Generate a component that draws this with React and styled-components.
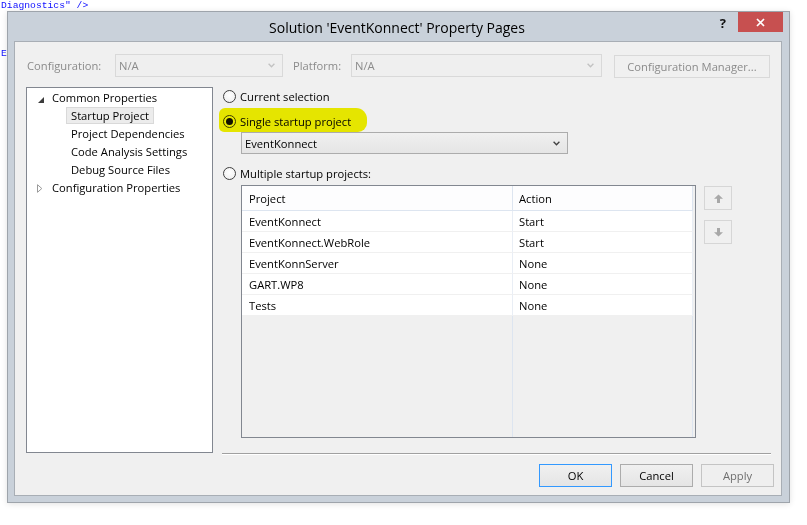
import React from "react";
import styled, { createGlobalStyle } from "styled-components";

const UI_FONT = `"Open Sans", "Noto Sans", sans-serif`;

const Global = createGlobalStyle`
  html, body { margin: 0; padding: 0; background: #fff; }
  body { font-family: ${UI_FONT}; }
  * { box-sizing: border-box; }
`;

const Desktop = styled.div`
  position: relative;
  width: 807px;
  height: 525px;
  background: #fff;
  overflow: hidden;
`;

const CodeBehind = styled.div`
  margin-top: -2px;
  padding-left: 1px;
  font: 9.7px/16px "Liberation Mono", "DejaVu Sans Mono", monospace;
  color: #1010ff;
  white-space: pre;
`;

const CodeLine = styled.div`
  height: 16px;
`;

const Window = styled.div`
  position: absolute;
  left: 7px;
  top: 11px;
  width: 783px;
  height: 492px;
  border: 1px solid #9ea4ab;
  background: #c9d1da;
  box-shadow: 0 1px 6px rgba(0, 0, 0, 0.12);
  display: flex;
  flex-direction: column;
  padding: 0 7px 6px 6px;
`;

const TitleBar = styled.div`
  height: 29px;
  display: grid;
  grid-template-columns: 1fr auto 1fr;
  align-items: center;
  margin-right: -1px;
`;

const Title = styled.div`
  grid-column: 2;
  font: 400 14px ${UI_FONT};
  color: #000;
  padding-top: 1px;
  margin-left: -3px;
`;

const Controls = styled.div`
  grid-column: 3;
  justify-self: end;
  align-self: start;
  display: flex;
  align-items: flex-start;
`;

const HelpGlyph = styled.div`
  font: 700 13px ${UI_FONT};
  color: #111;
  margin: 2px 12px 0 0;
`;

const CloseButton = styled.div`
  width: 45px;
  height: 20px;
  background: #c75050;
  display: flex;
  align-items: center;
  justify-content: center;
`;

const Client = styled.div`
  flex: 1;
  border: 1px solid #a8aeb5;
  background: #f0f0f0;
  display: flex;
  flex-direction: column;
  padding: 12px 10px 6px 11px;
  font: 400 11.2px ${UI_FONT};
  color: #000;
`;

const ConfigRow = styled.div`
  display: flex;
  align-items: flex-start;
  height: 23px;
`;

const FieldLabel = styled.div`
  width: ${(p) => p.$w}px;
  margin-left: ${(p) => p.$ml || 0}px;
  height: 23px;
  line-height: 23px;
  color: #8b8b8b;
`;

const Combo = styled.div`
  width: ${(p) => p.$w}px;
  height: ${(p) => p.$h || 23}px;
  display: flex;
  align-items: center;
  justify-content: space-between;
  padding: 0 7px 0 3px;
  border: 1px solid ${(p) => (p.$disabled ? "#d9d9d9" : "#acacac")};
  background: ${(p) =>
    p.$disabled ? "#efefef" : "linear-gradient(#f0f0f0, #e5e5e5)"};
  color: ${(p) => (p.$disabled ? "#8b8b8b" : "#000")};
`;

const ConfigManagerButton = styled.div`
  width: 156px;
  height: 23px;
  margin: 1px 0 0 12px;
  border: 1px solid #d9d9d9;
  background: #f0f0f0;
  color: #8b8b8b;
  display: flex;
  align-items: center;
  justify-content: center;
`;

const Main = styled.div`
  display: flex;
  align-items: flex-start;
  margin-top: 10px;
`;

const Tree = styled.div`
  width: 187px;
  height: 366px;
  border: 1px solid #828790;
  background: #fff;
  padding-top: 0;
`;

const TreeRow = styled.div`
  height: 18px;
  display: flex;
  align-items: center;
  padding-left: ${(p) => p.$indent}px;
`;

const Expander = styled.span`
  width: 14px;
  height: 18px;
  display: flex;
  align-items: center;
  padding-top: ${(p) => p.$dy}px;
`;

const TreeLabel = styled.span`
  height: 17px;
  line-height: 15px;
  padding: 0 4px;
  border: 1px solid ${(p) => (p.$selected ? "#d9d9d9" : "transparent")};
  background: ${(p) => (p.$selected ? "#ececec" : "transparent")};
  margin-left: ${(p) => p.$ml || 0}px;
`;

const RightPanel = styled.div`
  flex: 1;
  margin-left: 9px;
  display: flex;
  flex-direction: column;
`;

const RadioRow = styled.label`
  position: relative;
  height: 18px;
  margin-top: ${(p) => p.$mt || 0}px;
  display: flex;
  align-items: center;
  gap: 4px;
  padding-left: 1px;
  ${(p) =>
    p.$highlight &&
    `
    &::after {
      content: "";
      position: absolute;
      left: -3px;
      top: -4px;
      width: 148px;
      height: 24px;
      background: #f4f400;
      border-radius: 6px 11px 9px 5px;
      mix-blend-mode: multiply;
      pointer-events: none;
    }
  `}
`;

const RadioCircle = styled.span`
  width: 13px;
  height: 13px;
  border-radius: 50%;
  border: 1px solid #3f3f3f;
  background: radial-gradient(circle at 50% 40%, #ffffff, #ececec);
  display: flex;
  align-items: center;
  justify-content: center;
  &::before {
    content: "";
    width: 7px;
    height: 7px;
    border-radius: 50%;
    background: ${(p) => (p.$checked ? "#111" : "transparent")};
  }
`;

const Indented = styled.div`
  margin-left: 19px;
  margin-top: ${(p) => p.$mt || 0}px;
  display: flex;
  align-items: flex-start;
  gap: 8px;
`;

const Grid = styled.div`
  width: 455px;
  height: 253px;
  border: 1px solid #828790;
  background: #f0f0f0;
  display: flex;
  flex-direction: column;
`;

const GridRow = styled.div`
  display: grid;
  grid-template-columns: 271px 180px;
  height: ${(p) => p.$h}px;
  flex: ${(p) => (p.$fill ? 1 : "none")};
`;

const Cell = styled.div`
  display: flex;
  align-items: center;
  padding-left: ${(p) => (p.$col === 0 ? 7 : 6)}px;
  background: ${(p) =>
    p.$kind === "header" ? "#fdfdfe" : p.$kind === "fill" ? "transparent" : "#fff"};
  border-right: 1px solid
    ${(p) => (p.$kind === "row" ? "#e9eef5" : "#dde5f0")};
  border-bottom: ${(p) =>
    p.$kind === "header"
      ? "1px solid #dde5f0"
      : p.$kind === "row"
      ? "1px solid #f0f0f0"
      : "none"};
`;

const SideButtons = styled.div`
  margin-top: 1px;
  display: flex;
  flex-direction: column;
  gap: 10px;
`;

const SideButton = styled.div`
  width: 28px;
  height: 24px;
  border: 1px solid #d6d6d6;
  background: #f0f0f0;
  display: flex;
  align-items: center;
  justify-content: center;
`;

const Separator = styled.div`
  margin-top: 15px;
  height: 2px;
  border-top: 1px solid #a0a0a0;
  border-bottom: 1px solid #ffffff;
`;

const Footer = styled.div`
  margin-top: 9px;
  margin-right: -3px;
  display: flex;
  justify-content: flex-end;
  gap: 8px;
`;

const PushButton = styled.div`
  width: 73px;
  height: 23px;
  display: flex;
  align-items: center;
  justify-content: center;
  border: 1px solid
    ${(p) => (p.$default ? "#3399ff" : p.$disabled ? "#c4c4c4" : "#acacac")};
  background: ${(p) =>
    p.$disabled ? "#efefef" : "linear-gradient(#f0f0f0, #e5e5e5)"};
  color: ${(p) => (p.$disabled ? "#6f6f6f" : "#000")};
`;

const Chevron = ({ color }) => (
  <svg width="7" height="5" viewBox="0 0 7 5">
    <polyline points="0.6,0.8 3.5,3.8 6.4,0.8" fill="none" stroke={color} strokeWidth="1.3" />
  </svg>
);

const ArrowIcon = ({ down }) => (
  <svg width="9" height="9" viewBox="0 0 9 9" style={down ? { transform: "rotate(180deg)" } : undefined}>
    <path d="M4.5 0.5 L9 4.8 L6 4.8 L6 9 L3 9 L3 4.8 L0 4.8 Z" fill="#a8a8a8" />
  </svg>
);

const projects = [
  ["EventKonnect", "Start"],
  ["EventKonnect.WebRole", "Start"],
  ["EventKonnServer", "None"],
  ["GART.WP8", "None"],
  ["Tests", "None"],
];

const treeChildren = [
  "Startup Project",
  "Project Dependencies",
  "Code Analysis Settings",
  "Debug Source Files",
];

export default function App() {
  return (
    <Desktop>
      <Global />
      <CodeBehind>
        <CodeLine>{'Diagnostics" />'}</CodeLine>
        <CodeLine />
        <CodeLine />
        <CodeLine>E</CodeLine>
      </CodeBehind>

      <Window>
        <TitleBar>
          <Title>Solution 'EventKonnect' Property Pages</Title>
          <Controls>
            <HelpGlyph>?</HelpGlyph>
            <CloseButton>
              <svg width="9" height="9" viewBox="0 0 9 9">
                <path d="M1 1 L8 8 M8 1 L1 8" stroke="#fff" strokeWidth="1.7" />
              </svg>
            </CloseButton>
          </Controls>
        </TitleBar>

        <Client>
          <ConfigRow>
            <FieldLabel $w={88} $ml={1}>Configuration:</FieldLabel>
            <Combo $w={168} $disabled>
              <span>N/A</span>
              <Chevron color="#c2c2c2" />
            </Combo>
            <FieldLabel $w={58} $ml={10}>Platform:</FieldLabel>
            <Combo $w={251} $disabled>
              <span>N/A</span>
              <Chevron color="#c2c2c2" />
            </Combo>
            <ConfigManagerButton>Configuration Manager...</ConfigManagerButton>
          </ConfigRow>

          <Main>
            <Tree>
              <TreeRow $indent={11}>
                <Expander $dy={5}>
                  <svg width="6" height="6" viewBox="0 0 6 6">
                    <path d="M6 0 L6 6 L0 6 Z" fill="#3c3c3c" />
                  </svg>
                </Expander>
                <TreeLabel $ml={-5}>Common Properties</TreeLabel>
              </TreeRow>
              {treeChildren.map((t, i) => (
                <TreeRow key={t} $indent={39}>
                  <TreeLabel $selected={i === 0}>{t}</TreeLabel>
                </TreeRow>
              ))}
              <TreeRow $indent={10}>
                <Expander $dy={3}>
                  <svg width="6" height="9" viewBox="0 0 6 9">
                    <path d="M0.5 0.7 L4.8 4.5 L0.5 8.3 Z" fill="none" stroke="#9a9a9a" strokeWidth="1" />
                  </svg>
                </Expander>
                <TreeLabel $ml={-4}>Configuration Properties</TreeLabel>
              </TreeRow>
            </Tree>

            <RightPanel>
              <RadioRow>
                <RadioCircle />
                Current selection
              </RadioRow>
              <RadioRow $mt={7} $highlight>
                <RadioCircle $checked />
                Single startup project
              </RadioRow>
              <Indented $mt={2}>
                <Combo $w={327} $h={22}>
                  <span>EventKonnect</span>
                  <Chevron color="#404040" />
                </Combo>
              </Indented>
              <RadioRow $mt={10}>
                <RadioCircle />
                Multiple startup projects:
              </RadioRow>
              <Indented $mt={3}>
                <Grid>
                  <GridRow $h={25}>
                    <Cell $kind="header" $col={0}>Project</Cell>
                    <Cell $kind="header" $col={1}>Action</Cell>
                  </GridRow>
                  {projects.map(([name, action]) => (
                    <GridRow key={name} $h={21}>
                      <Cell $kind="row" $col={0}>{name}</Cell>
                      <Cell $kind="row" $col={1}>{action}</Cell>
                    </GridRow>
                  ))}
                  <GridRow $fill>
                    <Cell $kind="fill" $col={0} />
                    <Cell $kind="fill" $col={1} />
                  </GridRow>
                </Grid>
                <SideButtons>
                  <SideButton>
                    <ArrowIcon />
                  </SideButton>
                  <SideButton>
                    <ArrowIcon down />
                  </SideButton>
                </SideButtons>
              </Indented>
              <Separator />
            </RightPanel>
          </Main>

          <Footer>
            <PushButton $default>OK</PushButton>
            <PushButton>Cancel</PushButton>
            <PushButton $disabled>Apply</PushButton>
          </Footer>
        </Client>
      </Window>
    </Desktop>
  );
}
